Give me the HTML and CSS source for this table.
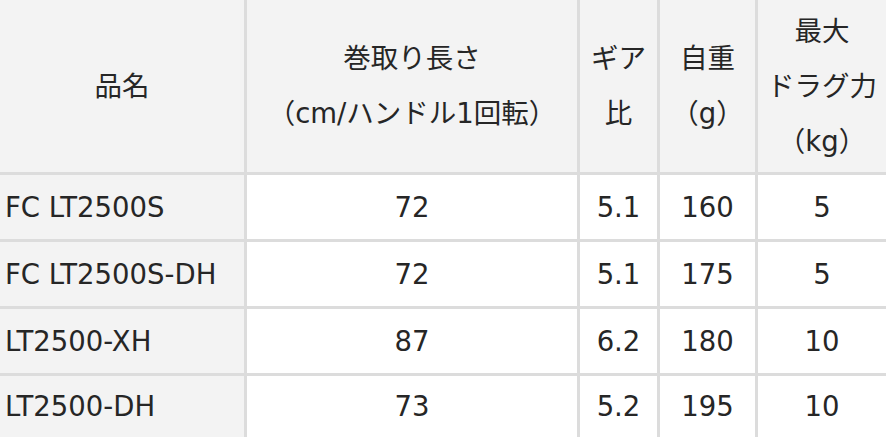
FILE: index.html
```html
<!DOCTYPE html>
<html lang="ja">
<head>
<meta charset="utf-8">
<link rel="stylesheet" href="styles.css">
</head>
<body>
<div class="spec">
  <div class="cell head">品名</div>
  <div class="cell head">巻取り長さ<br>（cm/ハンドル1回転）</div>
  <div class="cell head">ギア<br>比</div>
  <div class="cell head">自重<br>（g）</div>
  <div class="cell head">最大<br>ドラグ力<br>（kg）</div>

  <div class="cell name">FC LT2500S</div>
  <div class="cell">72</div>
  <div class="cell">5.1</div>
  <div class="cell">160</div>
  <div class="cell">5</div>

  <div class="cell name">FC LT2500S-DH</div>
  <div class="cell">72</div>
  <div class="cell">5.1</div>
  <div class="cell">175</div>
  <div class="cell">5</div>

  <div class="cell name">LT2500-XH</div>
  <div class="cell">87</div>
  <div class="cell">6.2</div>
  <div class="cell">180</div>
  <div class="cell">10</div>

  <div class="cell name">LT2500-DH</div>
  <div class="cell">73</div>
  <div class="cell">5.2</div>
  <div class="cell">195</div>
  <div class="cell">10</div>
</div>
</body>
</html>
```

FILE: styles.css
```css
html, body {
  margin: 0;
  padding: 0;
  background: #ffffff;
}

.spec {
  width: 886px;
  height: 437px;
  display: grid;
  grid-template-columns: 244px 330px 77px 95px 1fr;
  grid-template-rows: 172px 64px 64px 64px 1fr;
  gap: 3px;
  background: #dcdcdc;
  font-family: "DejaVu Sans", "Noto Sans CJK JP", sans-serif;
  font-size: 27.5px;
  color: #262626;
  overflow: hidden;
}

.cell {
  background: #ffffff;
  display: flex;
  align-items: center;
  justify-content: center;
  text-align: center;
  line-height: 55px;
  white-space: nowrap;
}

.head {
  background: #f3f3f3;
}

.name {
  background: #f3f3f3;
  justify-content: flex-start;
  text-align: left;
  padding-left: 5px;
}
```
